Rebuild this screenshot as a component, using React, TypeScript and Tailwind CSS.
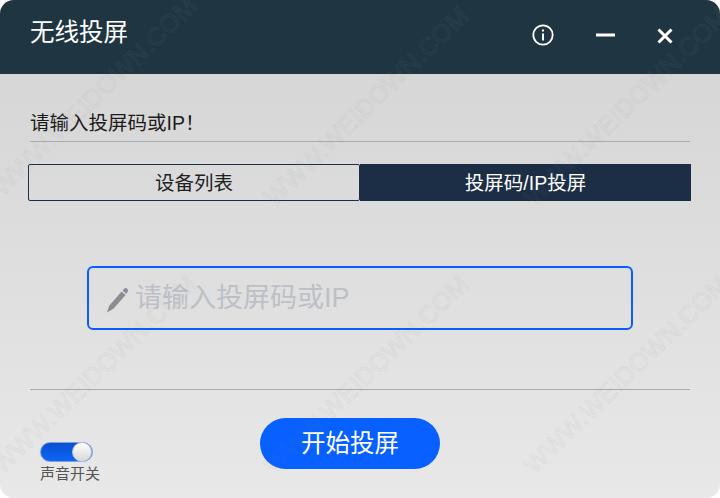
const marks = [
  [5, 200], [277, 210], [537, 210],
  [5, 478], [277, 478], [537, 478],
];

const font = { fontFamily: '"Liberation Sans", "Noto Sans CJK SC", sans-serif' };

export default function App() {
  return (
    <div className="relative w-[720px] h-[498px] overflow-hidden bg-white" style={font}>
      <div className="flex flex-col h-full rounded-[14px] overflow-hidden bg-gradient-to-b from-[#d3d3d3] to-[#e8e8e8]">
        <header className="h-[74px] shrink-0 bg-[#1f3642] flex items-start justify-between pl-[30px] pr-[47px]">
          <h1 className="text-[24.5px] leading-[32px] pt-[17px] text-white font-normal">无线投屏</h1>
          <div className="flex items-center gap-[42px] pt-[24px]">
            <svg width="22" height="22" viewBox="0 0 22 22" fill="none" stroke="white">
              <circle cx="11" cy="11" r="9.7" strokeWidth="1.8" />
              <path d="M11 9.5V16.5" strokeWidth="2" />
              <path d="M11 5.5V7.5" strokeWidth="2" />
            </svg>
            <svg width="19" height="4" viewBox="0 0 19 4"><rect y="0.5" width="19" height="3" fill="white" /></svg>
            <svg width="16" height="16" viewBox="0 0 16 16" fill="none" stroke="white" strokeWidth="3" className="mt-[2px]">
              <path d="M1.5 1.5L14.5 14.5M14.5 1.5L1.5 14.5" />
            </svg>
          </div>
        </header>

        <main className="flex-1 flex flex-col pl-[30px] pr-[30px]">
          <p className="mt-[36px] h-[32px] text-[19.5px] leading-[26px] text-[#1c1c1c] border-b border-[#aaaaaa]">请输入投屏码或IP！</p>

          <div className="mt-[22px] -ml-[2px] -mr-[1px] flex h-[37px] text-[19.5px] leading-[28px]">
            <div className="w-[332px] flex items-center justify-center border border-[#1d2f47] rounded-[2px] text-[#222222] pt-[1px]">设备列表</div>
            <div className="flex-1 flex items-center justify-center bg-[#1b2e46] text-white pt-[1px]">投屏码/IP投屏</div>
          </div>

          <div className="mt-[65px] ml-[57px] w-[546px] h-[64px] flex items-center pl-[17px] border-2 border-[#0a5cff] rounded-[6px] gap-[6px]">
            <svg width="23" height="26" viewBox="0 0 23 26" className="mt-[4px] shrink-0">
              <path d="M0.8 25.4L3.4 18.6L15.6 4.6L19.6 8L7.4 21.8Z" fill="#8b8d92" />
              <path d="M16.6 3.4L18 1.9C19 0.9 20.2 0.9 21.2 1.7C22.2 2.6 22.3 3.9 21.4 5L20.4 6.9Z" fill="#8b8d92" />
            </svg>
            <span className="text-[27px] leading-[34px] text-[#bcc0c7]">请输入投屏码或IP</span>
          </div>

          <div className="mt-[59px] border-t border-[#aaaaaa]" />

          <div className="relative flex pl-[230px] pt-[28px]">
            <button className="w-[180px] h-[51px] rounded-full bg-[#0760ff] text-white text-[24.5px] leading-[51px]">开始投屏</button>
            <div className="absolute left-[10px] top-[52px] flex flex-col items-start">
              <div className="w-[53px] h-[20px] rounded-full bg-gradient-to-b from-[#0a50d0] to-[#0b66f5] border border-[#7f9fe0] relative">
                <div className="absolute right-0 -top-px w-[20px] h-[20px] rounded-full bg-gradient-to-b from-[#ffffff] to-[#d8d8d8] border border-[#b8c4dc]" />
              </div>
              <span className="mt-[2px] text-[15px] leading-[20px] text-[#555555] whitespace-nowrap">声音开关</span>
            </div>
          </div>
        </main>
      </div>

      <div className="absolute inset-0 pointer-events-none overflow-hidden">
        {marks.map(([x, y]) => (
          <span
            key={`${x}-${y}`}
            className="absolute origin-bottom-left whitespace-nowrap text-[25px] leading-[25px] font-normal tracking-[0.3px] text-transparent [-webkit-text-stroke:1px_rgba(140,140,140,0.11)]"
            style={{ left: x, top: y - 25, transform: 'rotate(-44deg)' }}
          >
            WWW.WEIDOWN.COM
          </span>
        ))}
      </div>
    </div>
  );
}
